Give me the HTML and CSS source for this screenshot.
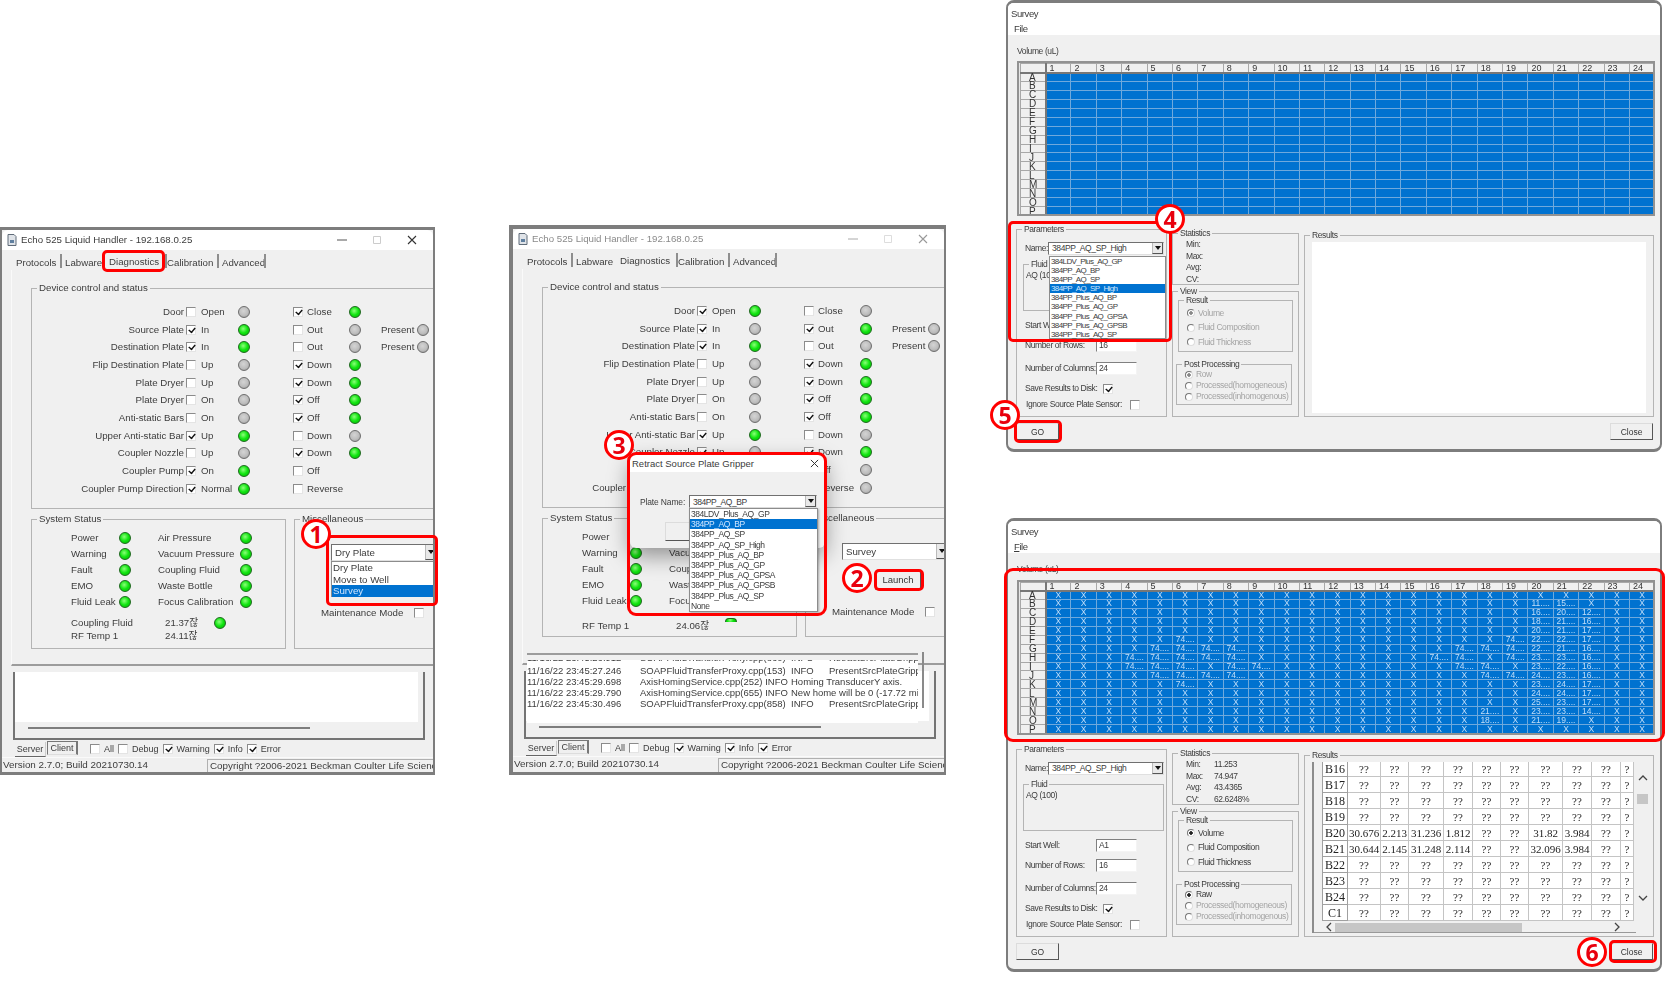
FILE: index.html
```html
<!DOCTYPE html>
<html lang="en">
<head>
<meta charset="utf-8">
<title>Echo 525 survey steps</title>
<link rel="stylesheet" href="styles.css">
</head>
<body>
<main class="canvas">

<section class="win win1">
  <header class="titlebar">
    <svg class="appicon" viewBox="0 0 10 12"><path d="M1 .5h6l2 2v9H1z" fill="#dfe3e8" stroke="#5f6b78"/><path d="M3 6h4v3H3z" fill="#5f7f9f"/></svg>
    <span class="wintitle">Echo 525 Liquid Handler - 192.168.0.25</span>
    <span class="winbtns">
      <svg viewBox="0 0 10 10"><path d="M0 5h10" stroke="#555"/></svg>
      <svg viewBox="0 0 10 10"><path d="M1.500 1.500h7v7h-7z" fill="none" stroke="#ccc"/></svg>
      <svg viewBox="0 0 10 10"><path d="M1 1l8 8M9 1l-8 8" stroke="#333" stroke-width="1.100"/></svg>
    </span>
  </header>
  <nav class="tabs">
    <span class="tab">Protocols</span><span class="tab nosep">Labware</span><span class="tab active">Diagnostics</span><span class="tab">Calibration</span><span class="tab">Advanced</span>
  </nav>
  <div class="panel">
    <fieldset class="device">
      <legend>Device control and status</legend>
      <div class="devgrid">
        <span class="l">Door</span><i class="cb"></i><span class="t">Open</span><i class="led"></i><i class="cb on c2"></i><span class="t">Close</span><i class="led on"></i>
        <span class="l">Source Plate</span><i class="cb on"></i><span class="t">In</span><i class="led on"></i><i class="cb c2"></i><span class="t">Out</span><i class="led"></i><span class="p">Present</span><i class="led"></i>
        <span class="l">Destination Plate</span><i class="cb on"></i><span class="t">In</span><i class="led on"></i><i class="cb c2"></i><span class="t">Out</span><i class="led"></i><span class="p">Present</span><i class="led"></i>
        <span class="l">Flip Destination Plate</span><i class="cb"></i><span class="t">Up</span><i class="led"></i><i class="cb on c2"></i><span class="t">Down</span><i class="led on"></i>
        <span class="l">Plate Dryer</span><i class="cb"></i><span class="t">Up</span><i class="led"></i><i class="cb on c2"></i><span class="t">Down</span><i class="led on"></i>
        <span class="l">Plate Dryer</span><i class="cb"></i><span class="t">On</span><i class="led"></i><i class="cb on c2"></i><span class="t">Off</span><i class="led on"></i>
        <span class="l">Anti-static Bars</span><i class="cb"></i><span class="t">On</span><i class="led"></i><i class="cb on c2"></i><span class="t">Off</span><i class="led on"></i>
        <span class="l">Upper Anti-static Bar</span><i class="cb on"></i><span class="t">Up</span><i class="led on"></i><i class="cb c2"></i><span class="t">Down</span><i class="led"></i>
        <span class="l">Coupler Nozzle</span><i class="cb"></i><span class="t">Up</span><i class="led"></i><i class="cb on c2"></i><span class="t">Down</span><i class="led on"></i>
        <span class="l">Coupler Pump</span><i class="cb on"></i><span class="t">On</span><i class="led on"></i><i class="cb c2"></i><span class="t">Off</span>
        <span class="l">Coupler Pump Direction</span><i class="cb on"></i><span class="t">Normal</span><i class="led on"></i><i class="cb c2"></i><span class="t">Reverse</span>
      </div>
    </fieldset>
    <div class="lower">
      <fieldset class="sys">
        <legend>System Status</legend>
        <div class="leds">
          <span>Power</span><i class="led on"></i><span>Air Pressure</span><i class="led on"></i>
          <span>Warning</span><i class="led on"></i><span>Vacuum Pressure</span><i class="led on"></i>
          <span>Fault</span><i class="led on"></i><span>Coupling Fluid</span><i class="led on"></i>
          <span>EMO</span><i class="led on"></i><span>Waste Bottle</span><i class="led on"></i>
          <span>Fluid Leak</span><i class="led on"></i><span>Focus Calibration</span><i class="led on"></i>
        </div>
        <div class="temps">
          <span>Coupling Fluid</span><span>21.37잖</span><i class="led on"></i>
          <span>RF Temp 1</span><span>24.11잖</span>
        </div>
      </fieldset>
      <fieldset class="misc">
        <legend>Miscellaneous</legend>
        <div class="sel misc-sel"><span>Dry Plate</span><i class="arrow"></i></div>
        <ul class="list misc-list"><li>Dry Plate</li><li>Move to Well</li><li class="hl">Survey</li></ul>
        <div class="maint"><span>Maintenance Mode</span><i class="cb"></i></div>
      </fieldset>
    </div>
  </div>
  <div class="logframe">
    <div class="logwhite"></div>
    <div class="hscroll"><i></i></div>
  </div>
  <div class="logtabs">
    <span class="ltab">Server</span><span class="ltab up">Client</span>
    <i class="cb f1"></i><span>All</span><i class="cb"></i><span>Debug</span><i class="cb on"></i><span>Warning</span><i class="cb on"></i><span>Info</span><i class="cb on"></i><span>Error</span>
  </div>
  <footer class="status"><span>Version 2.7.0; Build 20210730.14</span><span class="copy">Copyright ?2006-2021 Beckman Coulter Life Scienc</span></footer>
  <div class="teal"></div>
</section>

<section class="win win2">
  <header class="titlebar dim">
    <svg class="appicon" viewBox="0 0 10 12"><path d="M1 .5h6l2 2v9H1z" fill="#dfe3e8" stroke="#5f6b78"/><path d="M3 6h4v3H3z" fill="#5f7f9f"/></svg>
    <span class="wintitle">Echo 525 Liquid Handler - 192.168.0.25</span>
    <span class="winbtns">
      <svg viewBox="0 0 10 10"><path d="M0 5h10" stroke="#aaa"/></svg>
      <svg viewBox="0 0 10 10"><path d="M1.500 1.500h7v7h-7z" fill="none" stroke="#ddd"/></svg>
      <svg viewBox="0 0 10 10"><path d="M1 1l8 8M9 1l-8 8" stroke="#999" stroke-width="1.100"/></svg>
    </span>
  </header>
  <nav class="tabs">
    <span class="tab">Protocols</span><span class="tab nosep">Labware</span><span class="tab active">Diagnostics</span><span class="tab">Calibration</span><span class="tab">Advanced</span>
  </nav>
  <div class="panel">
    <fieldset class="device">
      <legend>Device control and status</legend>
      <div class="devgrid">
        <span class="l">Door</span><i class="cb on"></i><span class="t">Open</span><i class="led on"></i><i class="cb c2"></i><span class="t">Close</span><i class="led"></i>
        <span class="l">Source Plate</span><i class="cb on"></i><span class="t">In</span><i class="led"></i><i class="cb on c2"></i><span class="t">Out</span><i class="led on"></i><span class="p">Present</span><i class="led"></i>
        <span class="l">Destination Plate</span><i class="cb on"></i><span class="t">In</span><i class="led on"></i><i class="cb c2"></i><span class="t">Out</span><i class="led"></i><span class="p">Present</span><i class="led"></i>
        <span class="l">Flip Destination Plate</span><i class="cb"></i><span class="t">Up</span><i class="led"></i><i class="cb on c2"></i><span class="t">Down</span><i class="led on"></i>
        <span class="l">Plate Dryer</span><i class="cb"></i><span class="t">Up</span><i class="led"></i><i class="cb on c2"></i><span class="t">Down</span><i class="led on"></i>
        <span class="l">Plate Dryer</span><i class="cb"></i><span class="t">On</span><i class="led"></i><i class="cb on c2"></i><span class="t">Off</span><i class="led on"></i>
        <span class="l">Anti-static Bars</span><i class="cb"></i><span class="t">On</span><i class="led"></i><i class="cb on c2"></i><span class="t">Off</span><i class="led on"></i>
        <span class="l">Upper Anti-static Bar</span><i class="cb on"></i><span class="t">Up</span><i class="led on"></i><i class="cb c2"></i><span class="t">Down</span><i class="led"></i>
        <span class="l">Coupler Nozzle</span><i class="cb on"></i><span class="t">Up</span><i class="led"></i><i class="cb on c2"></i><span class="t">Down</span><i class="led on"></i>
        <span class="l">Coupler Pump</span><i class="cb on"></i><span class="t">On</span><i class="led"></i><i class="cb c2"></i><span class="t">Off</span><i class="led"></i>
        <span class="l">Coupler Pump Direction</span><i class="cb on"></i><span class="t">Normal</span><i class="led"></i><i class="cb c2"></i><span class="t">Reverse</span><i class="led"></i>
      </div>
    </fieldset>
    <div class="lower">
      <fieldset class="sys">
        <legend>System Status</legend>
        <div class="leds">
          <span>Power</span><i class="led on"></i><span>Air Pressure</span><i class="led on"></i>
          <span>Warning</span><i class="led on"></i><span>Vacuum Pressure</span><i class="led on"></i>
          <span>Fault</span><i class="led on"></i><span>Coupling Fluid</span><i class="led on"></i>
          <span>EMO</span><i class="led on"></i><span>Waste Bottle</span><i class="led on"></i>
          <span>Fluid Leak</span><i class="led on"></i><span>Focus Calibration</span><i class="led on"></i>
        </div>
        <div class="temps">
          <span></span><span></span><i class="led on dome"></i>
          <span>RF Temp 1</span><span>24.06잖</span>
        </div>
      </fieldset>
      <fieldset class="misc">
        <legend>Miscellaneous</legend>
        <div class="sel misc-sel"><span>Survey</span><i class="arrow"></i></div>
        <button class="btn launch">Launch</button>
        <div class="maint"><span>Maintenance Mode</span><i class="cb"></i></div>
      </fieldset>
    </div>
  </div>
  <div class="logframe">
    <div class="logwhite"></div>
    <div class="hscroll"><i></i></div>
  </div>
  <div class="logtabs">
    <span class="ltab">Server</span><span class="ltab up">Client</span>
    <i class="cb f1"></i><span>All</span><i class="cb"></i><span>Debug</span><i class="cb on"></i><span>Warning</span><i class="cb on"></i><span>Info</span><i class="cb on"></i><span>Error</span>
  </div>
  <footer class="status"><span>Version 2.7.0; Build 20210730.14</span><span class="copy">Copyright ?2006-2021 Beckman Coulter Life Scienc</span></footer>
  <div class="ghost">
    <div class="ghostline"></div>
    <div class="ghostlog">
      <div class="logline clip"><span>11/16/22 23:45:26.912</span><span>SOAPFluidTransferProxy.cpp(860)</span><span>INFO</span><span>RetractSrcPlateGripper</span></div>
      <div class="logline"><span>11/16/22 23:45:27.246</span><span>SOAPFluidTransferProxy.cpp(153)</span><span>INFO</span><span>PresentSrcPlateGripper</span></div>
      <div class="logline"><span>11/16/22 23:45:29.698</span><span>AxisHomingService.cpp(252) INFO</span><span class="sh">Homing TransducerY axis.</span></div>
      <div class="logline"><span>11/16/22 23:45:29.790</span><span>AxisHomingService.cpp(655) INFO</span><span class="sh">New home will be 0 (-17.72 micro</span></div>
      <div class="logline"><span>11/16/22 23:45:30.496</span><span>SOAPFluidTransferProxy.cpp(858)</span><span>INFO</span><span>PresentSrcPlateGripper</span></div>
    </div>
  </div>
  <div class="ghostbar"></div>
</section>

<section class="dialog">
  <header class="dlgtitle"><span>Retract Source Plate Gripper</span><svg viewBox="0 0 10 10"><path d="M1 1l8 8M9 1l-8 8" stroke="#333" stroke-width="1.100"/></svg></header>
  <div class="dlgbody">
    <div class="dlgrow"><span>Plate Name:</span>
      <div class="sel dlg-sel"><span>384PP_AQ_BP</span><i class="arrow"></i>
        <ul class="list dlg-list"><li>384LDV_Plus_AQ_GP</li><li class="hl">384PP_AQ_BP</li><li>384PP_AQ_SP</li><li>384PP_AQ_SP_High</li><li>384PP_Plus_AQ_BP</li><li>384PP_Plus_AQ_GP</li><li>384PP_Plus_AQ_GPSA</li><li>384PP_Plus_AQ_GPSB</li><li>384PP_Plus_AQ_SP</li><li>None</li></ul>
      </div>
    </div>
    <button class="btn dlgbtn">OK</button>
  </div>
</section>

<section class="win survey s1">
  <header class="band"><div>Survey</div><div class="menu">File</div></header>
  <div class="vol">Volume (uL)</div>
  <div class="plate">
    <table>
      <tr><th><th>1<th>2<th>3<th>4<th>5<th>6<th>7<th>8<th>9<th>10<th>11<th>12<th>13<th>14<th>15<th>16<th>17<th>18<th>19<th>20<th>21<th>22<th>23<th>24
      <tr><th>A<td><td><td><td><td><td><td><td><td><td><td><td><td><td><td><td><td><td><td><td><td><td><td><td>
      <tr><th>B<td><td><td><td><td><td><td><td><td><td><td><td><td><td><td><td><td><td><td><td><td><td><td><td>
      <tr><th>C<td><td><td><td><td><td><td><td><td><td><td><td><td><td><td><td><td><td><td><td><td><td><td><td>
      <tr><th>D<td><td><td><td><td><td><td><td><td><td><td><td><td><td><td><td><td><td><td><td><td><td><td><td>
      <tr><th>E<td><td><td><td><td><td><td><td><td><td><td><td><td><td><td><td><td><td><td><td><td><td><td><td>
      <tr><th>F<td><td><td><td><td><td><td><td><td><td><td><td><td><td><td><td><td><td><td><td><td><td><td><td>
      <tr><th>G<td><td><td><td><td><td><td><td><td><td><td><td><td><td><td><td><td><td><td><td><td><td><td><td>
      <tr><th>H<td><td><td><td><td><td><td><td><td><td><td><td><td><td><td><td><td><td><td><td><td><td><td><td>
      <tr><th>I<td><td><td><td><td><td><td><td><td><td><td><td><td><td><td><td><td><td><td><td><td><td><td><td>
      <tr><th>J<td><td><td><td><td><td><td><td><td><td><td><td><td><td><td><td><td><td><td><td><td><td><td><td>
      <tr><th>K<td><td><td><td><td><td><td><td><td><td><td><td><td><td><td><td><td><td><td><td><td><td><td><td>
      <tr><th>L<td><td><td><td><td><td><td><td><td><td><td><td><td><td><td><td><td><td><td><td><td><td><td><td>
      <tr><th>M<td><td><td><td><td><td><td><td><td><td><td><td><td><td><td><td><td><td><td><td><td><td><td><td>
      <tr><th>N<td><td><td><td><td><td><td><td><td><td><td><td><td><td><td><td><td><td><td><td><td><td><td><td>
      <tr><th>O<td><td><td><td><td><td><td><td><td><td><td><td><td><td><td><td><td><td><td><td><td><td><td><td>
      <tr><th>P<td><td><td><td><td><td><td><td><td><td><td><td><td><td><td><td><td><td><td><td><td><td><td><td>
    </table>
  </div>
  <div class="panes">
    <fieldset class="params">
      <legend>Parameters</legend>
      <div class="namerow"><span>Name:</span>
        <div class="sel name-sel"><span>384PP_AQ_SP_High</span><i class="arrow"></i>
          <ul class="list name-list"><li>384LDV_Plus_AQ_GP</li><li>384PP_AQ_BP</li><li>384PP_AQ_SP</li><li class="hl">384PP_AQ_SP_High</li><li>384PP_Plus_AQ_BP</li><li>384PP_Plus_AQ_GP</li><li>384PP_Plus_AQ_GPSA</li><li>384PP_Plus_AQ_GPSB</li><li>384PP_Plus_AQ_SP</li></ul>
        </div>
      </div>
      <fieldset class="fluid"><legend>Fluid</legend><div>AQ (100)</div></fieldset>
      <div class="form">
        <div class="frow"><span>Start Well:</span><span class="inp">A1</span></div>
        <div class="frow"><span>Number of Rows:</span><span class="inp">16</span></div>
        <div class="frow"><span>Number of Columns:</span><span class="inp">24</span></div>
        <div class="frow save"><span>Save Results to Disk:</span><i class="cb on"></i></div>
        <div class="frow ign"><span>Ignore Source Plate Sensor:</span><i class="cb"></i></div>
      </div>
    </fieldset>
    <div class="midcol">
      <fieldset class="stats">
        <legend>Statistics</legend>
        <div class="statgrid"><span>Min:</span><span></span><span>Max:</span><span></span><span>Avg:</span><span></span><span>CV:</span><span></span></div>
      </fieldset>
      <fieldset class="view">
        <legend>View</legend>
        <fieldset class="result off">
          <legend>Result</legend>
          <div class="rad"><i class="radio on"></i>Volume</div>
          <div class="rad"><i class="radio"></i>Fluid Composition</div>
          <div class="rad"><i class="radio"></i>Fluid Thickness</div>
        </fieldset>
        <fieldset class="post off">
          <legend>Post Processing</legend>
          <div class="rad"><i class="radio on"></i>Row</div>
          <div class="rad"><i class="radio"></i>Processed(homogeneous)</div>
          <div class="rad"><i class="radio"></i>Processed(inhomogenous)</div>
        </fieldset>
      </fieldset>
    </div>
    <fieldset class="results">
      <legend>Results</legend>
      <div class="rblank"></div>
    </fieldset>
  </div>
  <div class="actions"><button class="btn">GO</button><button class="btn">Close</button></div>
</section>

<section class="win survey s2">
  <header class="band"><div>Survey</div><div class="menu"><u>F</u>ile</div></header>
  <div class="vol">Volume (uL)</div>
  <div class="plate data">
    <table>
      <tr><th><th>1<th>2<th>3<th>4<th>5<th>6<th>7<th>8<th>9<th>10<th>11<th>12<th>13<th>14<th>15<th>16<th>17<th>18<th>19<th>20<th>21<th>22<th>23<th>24
      <tr><th>A<td>X<td>X<td>X<td>X<td>X<td>X<td>X<td>X<td>X<td>X<td>X<td>X<td>X<td>X<td>X<td>X<td>X<td>X<td>X<td>X<td>X<td>X<td>X<td>X
      <tr><th>B<td>X<td>X<td>X<td>X<td>X<td>X<td>X<td>X<td>X<td>X<td>X<td>X<td>X<td>X<td>X<td>X<td>X<td>X<td>X<td>11....<td>15....<td>X<td>X<td>X
      <tr><th>C<td>X<td>X<td>X<td>X<td>X<td>X<td>X<td>X<td>X<td>X<td>X<td>X<td>X<td>X<td>X<td>X<td>X<td>X<td>X<td>16....<td>20....<td>12....<td>X<td>X
      <tr><th>D<td>X<td>X<td>X<td>X<td>X<td>X<td>X<td>X<td>X<td>X<td>X<td>X<td>X<td>X<td>X<td>X<td>X<td>X<td>X<td>18....<td>21....<td>16....<td>X<td>X
      <tr><th>E<td>X<td>X<td>X<td>X<td>X<td>X<td>X<td>X<td>X<td>X<td>X<td>X<td>X<td>X<td>X<td>X<td>X<td>X<td>X<td>20....<td>21....<td>17....<td>X<td>X
      <tr><th>F<td>X<td>X<td>X<td>X<td>X<td>74....<td>X<td>X<td>X<td>X<td>X<td>X<td>X<td>X<td>X<td>X<td>X<td>X<td>74....<td>22....<td>22....<td>17....<td>X<td>X
      <tr><th>G<td>X<td>X<td>X<td>X<td>74....<td>74....<td>74....<td>74....<td>X<td>X<td>X<td>X<td>X<td>X<td>X<td>X<td>74....<td>74....<td>74....<td>22....<td>21....<td>16....<td>X<td>X
      <tr><th>H<td>X<td>X<td>X<td>74....<td>74....<td>74....<td>74....<td>74....<td>X<td>X<td>X<td>X<td>X<td>X<td>X<td>74....<td>74....<td>X<td>74....<td>23....<td>23....<td>16....<td>X<td>X
      <tr><th>I<td>X<td>X<td>X<td>74....<td>74....<td>74....<td>X<td>74....<td>74....<td>X<td>X<td>X<td>X<td>X<td>X<td>X<td>74....<td>74....<td>X<td>23....<td>22....<td>16....<td>X<td>X
      <tr><th>J<td>X<td>X<td>X<td>X<td>74....<td>74....<td>74....<td>74....<td>X<td>X<td>X<td>X<td>X<td>X<td>X<td>X<td>X<td>74....<td>74....<td>24....<td>23....<td>16....<td>X<td>X
      <tr><th>K<td>X<td>X<td>X<td>X<td>X<td>74....<td>X<td>X<td>X<td>X<td>X<td>X<td>X<td>X<td>X<td>X<td>X<td>X<td>X<td>23....<td>24....<td>17....<td>X<td>X
      <tr><th>L<td>X<td>X<td>X<td>X<td>X<td>X<td>X<td>X<td>X<td>X<td>X<td>X<td>X<td>X<td>X<td>X<td>X<td>X<td>X<td>24....<td>24....<td>17....<td>X<td>X
      <tr><th>M<td>X<td>X<td>X<td>X<td>X<td>X<td>X<td>X<td>X<td>X<td>X<td>X<td>X<td>X<td>X<td>X<td>X<td>X<td>X<td>25....<td>23....<td>17....<td>X<td>X
      <tr><th>N<td>X<td>X<td>X<td>X<td>X<td>X<td>X<td>X<td>X<td>X<td>X<td>X<td>X<td>X<td>X<td>X<td>X<td>21....<td>X<td>23....<td>23....<td>14....<td>X<td>X
      <tr><th>O<td>X<td>X<td>X<td>X<td>X<td>X<td>X<td>X<td>X<td>X<td>X<td>X<td>X<td>X<td>X<td>X<td>X<td>18....<td>X<td>21....<td>19....<td>X<td>X<td>X
      <tr><th>P<td>X<td>X<td>X<td>X<td>X<td>X<td>X<td>X<td>X<td>X<td>X<td>X<td>X<td>X<td>X<td>X<td>X<td>X<td>X<td>X<td>X<td>X<td>X<td>X
    </table>
  </div>
  <div class="panes">
    <fieldset class="params">
      <legend>Parameters</legend>
      <div class="namerow"><span>Name:</span>
        <div class="sel name-sel"><span>384PP_AQ_SP_High</span><i class="arrow"></i></div>
      </div>
      <fieldset class="fluid"><legend>Fluid</legend><div>AQ (100)</div></fieldset>
      <div class="form">
        <div class="frow"><span>Start Well:</span><span class="inp">A1</span></div>
        <div class="frow"><span>Number of Rows:</span><span class="inp">16</span></div>
        <div class="frow"><span>Number of Columns:</span><span class="inp">24</span></div>
        <div class="frow save"><span>Save Results to Disk:</span><i class="cb on"></i></div>
        <div class="frow ign"><span>Ignore Source Plate Sensor:</span><i class="cb"></i></div>
      </div>
    </fieldset>
    <div class="midcol">
      <fieldset class="stats">
        <legend>Statistics</legend>
        <div class="statgrid"><span>Min:</span><span>11.253</span><span>Max:</span><span>74.947</span><span>Avg:</span><span>43.4365</span><span>CV:</span><span>62.6248%</span></div>
      </fieldset>
      <fieldset class="view">
        <legend>View</legend>
        <fieldset class="result">
          <legend>Result</legend>
          <div class="rad"><i class="radio on"></i>Volume</div>
          <div class="rad"><i class="radio"></i>Fluid Composition</div>
          <div class="rad"><i class="radio"></i>Fluid Thickness</div>
        </fieldset>
        <fieldset class="post">
          <legend>Post Processing</legend>
          <div class="rad"><i class="radio on"></i>Raw</div>
          <div class="rad off"><i class="radio"></i>Processed(homogeneous)</div>
          <div class="rad off"><i class="radio"></i>Processed(inhomogenous)</div>
        </fieldset>
      </fieldset>
    </div>
    <fieldset class="results">
      <legend>Results</legend>
      <div class="rbox">
        <div class="rtable">
          <table>
            <tr><th>B16<td>??<td>??<td>??<td>??<td>??<td>??<td>??<td>??<td>??<td>?
            <tr><th>B17<td>??<td>??<td>??<td>??<td>??<td>??<td>??<td>??<td>??<td>?
            <tr><th>B18<td>??<td>??<td>??<td>??<td>??<td>??<td>??<td>??<td>??<td>?
            <tr><th>B19<td>??<td>??<td>??<td>??<td>??<td>??<td>??<td>??<td>??<td>?
            <tr><th>B20<td>30.676<td>2.213<td>31.236<td>1.812<td>??<td>??<td>31.82<td>3.984<td>??<td>?
            <tr><th>B21<td>30.644<td>2.145<td>31.248<td>2.114<td>??<td>??<td>32.096<td>3.984<td>??<td>?
            <tr><th>B22<td>??<td>??<td>??<td>??<td>??<td>??<td>??<td>??<td>??<td>?
            <tr><th>B23<td>??<td>??<td>??<td>??<td>??<td>??<td>??<td>??<td>??<td>?
            <tr><th>B24<td>??<td>??<td>??<td>??<td>??<td>??<td>??<td>??<td>??<td>?
            <tr><th>C1<td>??<td>??<td>??<td>??<td>??<td>??<td>??<td>??<td>??<td>?
          </table>
        </div>
        <div class="vbar">
          <svg viewBox="0 0 10 6"><path d="M1 5l4-4 4 4" fill="none" stroke="#444" stroke-width="1.300"/></svg>
          <i class="vthumb"></i>
          <svg class="vdown" viewBox="0 0 10 6"><path d="M1 1l4 4 4-4" fill="none" stroke="#444" stroke-width="1.300"/></svg>
        </div>
        <div class="hbar">
          <svg viewBox="0 0 6 10"><path d="M5 1L1 5l4 4" fill="none" stroke="#444" stroke-width="1.300"/></svg>
          <i class="hthumb"></i>
          <svg viewBox="0 0 6 10"><path d="M1 1l4 4-4 4" fill="none" stroke="#444" stroke-width="1.300"/></svg>
        </div>
      </div>
    </fieldset>
  </div>
  <div class="actions"><button class="btn">GO</button><button class="btn">Close</button></div>
</section>

<div class="rb rb-tab"></div>
<div class="rb rb-misc"></div>
<div class="rb rb-launch"></div>
<div class="rb rb-dlg"></div>
<div class="rb rb-params"></div>
<div class="rb rb-go"></div>
<div class="rb rb-grid"></div>
<div class="rb rb-close"></div>
<div class="num n1">1</div>
<div class="num n2">2</div>
<div class="num n3">3</div>
<div class="num n4">4</div>
<div class="num n5">5</div>
<div class="num n6">6</div>
</main>
</body>
</html>
```

FILE: styles.css
```css
* { box-sizing: border-box; }
html, body { margin: 0; padding: 0; background: #fff; }
.canvas {
  position: relative; width: 1667px; height: 981px; overflow: hidden; background: #fff;
  font: 9.700px/12px "Liberation Sans", Arial, "Noto Sans CJK KR", sans-serif; color: #3c3c3c;
}
i { font-style: normal; display: block; }
ul { list-style: none; margin: 0; padding: 0; }
fieldset { margin: 0; padding: 0; min-width: 0; border: 1px solid #b4b4b4; }
legend { padding: 0 2px; margin-left: 5px; line-height: 12px; }

/* windows on the canvas */
.win { position: absolute; background: #f0f0f0; border: 2px solid #7d7d7d; overflow: hidden; filter: blur(.3px); }
.win1 { left: 0; top: 227px; width: 435px; height: 548px; border-top-width: 3px; border-bottom-width: 3px; }
.win2 { left: 509px; top: 225px; width: 437px; height: 550px; border-left-width: 4px; border-top-width: 4px; border-bottom-width: 3px; }

.titlebar { display: flex; align-items: center; height: 20px; background: #fff; padding-left: 5px; border-radius: 6px 6px 0 0; }
.appicon { width: 10px; height: 12px; margin-right: 4px; }
.wintitle { flex: 1; }
.dim .wintitle { color: #8a8a8a; }
.winbtns { display: flex; gap: 25px; margin-right: 16px; }
.winbtns svg { width: 10px; height: 10px; }

.tabs { display: grid; grid-template-columns: 49px 44px 58px 55px 47px; height: 20px; padding: 5px 0 0 14px; }
.tab { position: relative; height: 15px; line-height: 15px; }
.tab::after { content: ""; position: absolute; right: 3px; top: -1px; width: 2px; height: 14px; background: #8e8e8e; }
.tab.nosep::after { display: none; }
.tab.active { margin-top: -1px; }
.tab.active::after { right: 0; top: 0; }

.panel { margin-left: 9px; height: 396px; padding: 12px 0 0 19px; border-left: 1px solid #fafafa; border-bottom: 2px solid #9c9c9c; }
.device { width: 410px; height: 227px; }
.devgrid { display: grid; padding-top: 9px; grid-template-columns: 152px 14px 39px 14px 42px 14px 41px 14px 19px 35px 14px; grid-auto-rows: 17.700px; align-items: center; }
.l { grid-column: 1; text-align: right; white-space: nowrap; }
.cb { width: 10px; height: 10px; background: #fff; border: 1px solid; border-color: #8b8b8b #e4e4e4 #e4e4e4 #8b8b8b; justify-self: center; }
.cb.on::after { content: ""; display: block; width: 4px; height: 7px; margin: -1px 0 0 2px; border: solid #111; border-width: 0 2px 2px 0; transform: rotate(40deg) scale(.72); }
.c2 { grid-column: 6; justify-self: start; }
.t { padding-left: 3px; white-space: nowrap; }
.c2 + .t { padding-left: 0; }
.p { grid-column: 10; justify-self: start; }
.led { width: 12px; height: 12px; border-radius: 50%; justify-self: center; border: 1px solid #6d6d6d; background: radial-gradient(circle at 45% 40%, #d4d4d4, #bdbdbd 55%, #8d8d8d); }
.led.on { border-color: #1c6a1c; background: radial-gradient(circle at 42% 38%, #8cff7a, #10e410 50%, #05b505); }
.led.dome { height: 4px; align-self: end; margin-bottom: -3px; border-radius: 6px 6px 0 0; border-bottom: 0; }

.lower { display: flex; gap: 8px; margin-top: 4px; }
.sys { width: 255px; height: 136px; flex: none; }
.win2 .sys, .win2 .misc { height: 125px; }
.misc { width: 145px; height: 136px; flex: none; padding-left: 36px; }
.misc legend { margin-left: -31px; }
.leds { display: grid; padding: 5px 0 0 39px; grid-template-columns: 48px 12px 27px 82px 12px; grid-auto-rows: 16px; align-items: center; }
.leds span:nth-of-type(even) { grid-column: 4; white-space: nowrap; }
.temps { display: grid; margin-top: 6px; padding-left: 39px; grid-template-columns: 94px 49px 12px; grid-auto-rows: 13px; align-items: center; }
.win2 .temps { margin-top: -3px; }

.sel { position: relative; display: flex; align-items: center; background: #fff; border: 1px solid; border-color: #707070 #e0e0e0 #e0e0e0 #707070; padding-left: 3px; white-space: nowrap; }
.sel > span { flex: 1; }
.arrow { width: 11px; height: 100%; background: #e9e9e9; border-left: 1px solid #bbb; border-right: 1px solid #555; border-bottom: 1px solid #555; position: relative; }
.arrow::after { content: ""; position: absolute; left: 2px; top: 50%; margin-top: -2px; border: 3px solid transparent; border-top: 4px solid #111; border-bottom: 0; }
.misc-sel { margin-top: 19px; width: 106px; height: 17px; }
.list { background: #fff; border: 1px solid #8c8c8c; line-height: 11.500px; }
.list .hl { background: #0072d0; color: #cfe6ff; }
.misc-list { width: 103px; height: 36px; }
.misc-list li { padding-left: 1px; }
.maint { display: flex; justify-content: space-between; align-items: center; width: 103px; margin: 10px 0 0 -10px; }
.btn { display: block; padding: 0; font: 9.500px/12px "Liberation Sans", Arial, sans-serif; color: #333; background: #f0f0f0; border: 1px solid; border-color: #dcdcdc #565656 #565656 #dcdcdc; }
.launch { width: 46px; height: 20px; margin: 10px 0 0 33px; }
.win2 .maint { margin-top: 16px; }

.logframe { margin: 6px 0 0 11px; width: 412px; height: 68px; border-left: 2px solid #747474; border-right: 2px solid #747474; border-bottom: 2px solid #747474; }
.logwhite { width: 403px; height: 50px; background: #fff; }
.hscroll i { width: 282px; height: 2px; margin: 5px 0 0 13px; background: #7d7d7d; }

.logtabs { display: flex; align-items: center; height: 16px; margin-top: 1px; padding-left: 13px; gap: 4px; font-size: 9px; }
.logtabs .cb { flex: none; }
.logtabs .f1 { margin-left: 8px; }
.ltab { width: 31px; height: 15px; line-height: 15px; text-align: center; margin-right: -3px; border-bottom: 1px solid #666; border-right: 1px solid #ccc; }
.ltab.up { height: 14px; margin: -3px 0 0 0; border: 1px solid #777; border-bottom-color: #ddd; border-right-width: 2px; line-height: 12px; }
.status { display: flex; height: 15px; align-items: center; padding-left: 1px; white-space: nowrap; font-size: 9.850px; border-top: 1px solid #fafafa; }
.status > span:first-child { flex: 0 0 204px; }
.copy { border-left: 1px solid #b0b0b0; border-top: 1px solid #b0b0b0; padding-left: 2px; height: 14px; margin-top: 1px; }
.teal { width: 282px; height: 2px; background: #2d7f8f; }

/* W2 leftovers from a half redrawn splitter */
.ghost { position: absolute; left: 14px; top: 423px; width: 391px; }
.ghostline { height: 2px; background: #9c9c9c; margin-top: 1px; }
.ghostlog { margin-top: 5px; height: 63px; background: #fff; overflow: hidden; font-size: 9.500px; line-height: 11px; }
.logline { display: grid; grid-template-columns: 113px 151px 38px 1fr; white-space: nowrap; overflow: hidden; }
.logline.clip { margin-top: -8px; margin-bottom: 2px; }
.logline .sh { grid-column: 3 / 5; }
.ghostbar { position: absolute; left: 409px; top: 423px; width: 2px; height: 56px; background: #8a8a8a; }

/* modal */
.dialog { position: absolute; left: 630px; top: 455px; width: 195px; height: 93px; background: #f0f0f0; box-shadow: 0 8px 22px rgba(0,0,0,.4); filter: blur(.3px); border-radius: 6px; }
.dlgtitle { display: flex; justify-content: space-between; align-items: center; height: 17px; padding: 0 6px 0 2px; background: #fff; border-radius: 6px 6px 0 0; font-size: 9.500px; }
.dlgtitle svg { width: 9px; height: 9px; }
.dlgbody { padding: 23px 0 0 10px; font-size: 8.500px; letter-spacing: -.15px; }
.dlgrow { display: flex; align-items: center; gap: 4px; height: 13px; }
.dlgrow > span { width: 45px; white-space: nowrap; }
.dlg-sel { width: 128px; height: 13px; font-size: 8.500px; letter-spacing: -.45px; }
.dlg-list { position: absolute; z-index: 2; left: -1px; top: 12px; width: 129px; height: 104px; line-height: 10.200px; padding-left: 1px; box-shadow: 1px 1px 2px rgba(0,0,0,.3); }
.dlg-list .hl { margin-left: -1px; padding-left: 1px; }
.dlgbtn { width: 80px; height: 19px; margin: 14px 0 0 25px; }

/* survey windows */
.survey { left: 1006px; width: 656px; height: 452px; border-top-width: 3px; border-bottom-width: 3px; border-radius: 8px; font-size: 8.500px; line-height: 11px; letter-spacing: -.4px; }
.s1 { top: 0; }
.s2 { top: 518px; height: 454px; }
.band { height: 32px; padding: 3px 0 0 3px; background: #fff; font-size: 9.500px; line-height: 15px; }
.menu { padding-left: 3px; }
.vol { height: 26px; padding: 11px 0 0 9px; }
.s2 .vol { height: 27px; }
.plate { width: 638px; height: 155px; margin-left: 9px; padding: 0 0 0 1px; border: 2px solid #929292; background: #e6e6e6; overflow: hidden; }
.plate table { table-layout: fixed; width: 634px; border-collapse: collapse; letter-spacing: 0; }
.plate th { width: 25.400px; height: 8.940px; padding: 0 0 0 3px; background: #f0f0f0; border: 1px solid #a8a8a8; font: 10px/7px "Liberation Sans", Arial, sans-serif; color: #333; text-align: left; }
.plate tr th:first-child { width: 25px; border-right: 2px solid #777; padding-left: 8px; }
.plate tr:first-child th { border-bottom: 2px solid #777; height: 9px; line-height: 6px; font-size: 9px; }
.plate.data tr:first-child th { height: 8px; }
.plate td { height: 8.940px; padding: 0; background: #0072d0; border: 1px solid #6fa9dc; font: 8.500px/7px "Liberation Sans", Arial, sans-serif; color: #c2def8; text-align: center; overflow: hidden; white-space: nowrap; }
.panes { display: flex; gap: 5px; align-items: flex-start; height: 194px; margin: 7px 0 0 8px; }
.s2 .panes { margin-top: 8px; }
.params { width: 151px; height: 194px; flex: none; padding-left: 8px; }
.params > legend { margin-left: -3px; }
.namerow { display: flex; align-items: center; height: 13px; margin-top: 7px; }
.namerow > span { width: 23px; }
.name-sel { width: 116px; height: 13px; }
.name-list { position: absolute; z-index: 2; left: 0; top: 13px; width: 117px; height: 83px; line-height: 9.100px; font-size: 8px; letter-spacing: -.6px; padding-left: 1px; }
.name-list .hl { margin-left: -1px; padding-left: 1px; }
.fluid { width: 141px; height: 53px; margin: 3px 0 0 -2px; }
.fluid div { padding-left: 2px; }
.form { display: grid; grid-template-rows: 20px 20px 26px 15px 17px; margin-top: 4px; }
.frow { display: flex; align-items: center; white-space: nowrap; }
.frow > span:first-child { width: 71px; }
.inp { width: 41px; height: 13px; padding-left: 2px; background: #fff; border: 1px solid; border-color: #808080 #f4f4f4 #f4f4f4 #808080; }
.save .cb { margin-left: 7px; }
.ign > span:first-child { width: auto; margin-left: 1px; }
.ign .cb { margin-left: 8px; }
.midcol { width: 127px; flex: none; padding-top: 4px; }
.stats { height: 58px; }
.statgrid { display: grid; grid-template-columns: 28px 1fr; grid-auto-rows: 11.500px; padding-left: 13px; }
.view { height: 132px; padding-left: 5px; }
.view > legend { margin-left: 0; }
.result { width: 115px; height: 58px; margin-top: -3px; }
.post { width: 116px; height: 47px; margin: 6px 0 0 -2px; }
.off, .off legend { color: #a4a4a4; }
.result.off legend, .post.off legend { color: #3c3c3c; }
.rad { display: flex; align-items: center; gap: 3px; height: 14.500px; padding-left: 8px; white-space: nowrap; }
.post .rad { height: 11px; margin-top: -1px; }
.post .rad + .rad { margin-top: 0; }
.radio { width: 8px; height: 8px; flex: none; border-radius: 50%; background: #fff; border: 1px solid; border-color: #777 #ddd #ddd #777; }
.radio.on { background: radial-gradient(circle, #222 0 1.500px, #fff 2px); }
.off .radio.on { background: radial-gradient(circle, #888 0 1.500px, #fff 2px); }
.results { width: 350px; height: 188px; flex: none; margin-top: 6px; padding-left: 7px; }
.results > legend { margin-left: -2px; }
.rblank { width: 334px; height: 171px; background: #fff; margin-top: 1px; }
.rbox { display: grid; width: 335px; height: 171px; margin-top: 1px; grid-template-columns: 322px 13px; grid-template-rows: 160px 11px; border-left: 2px solid #8c8c8c; }
.rtable { overflow: hidden; padding-left: 8px; }
.rtable table { table-layout: fixed; width: 312px; border-collapse: collapse; margin-top: -2px; background: #fff; letter-spacing: 0; }
.rtable th, .rtable td { height: 16px; padding: 0; font: 11px/14px "Liberation Serif", "Times New Roman", serif; color: #222; text-align: center; border: 1px solid #c4c4c4; white-space: nowrap; overflow: hidden; }
.rtable th { width: 25px; font-weight: 400; font-size: 12px; border-color: #a0a0a0; }
.rtable td:nth-child(2) { width: 33px; }
.rtable td:nth-child(3) { width: 28px; }
.rtable td:nth-child(4) { width: 35px; }
.rtable td:nth-child(5) { width: 29px; }
.rtable td:nth-child(6) { width: 28px; }
.rtable td:nth-child(7) { width: 28px; }
.rtable td:nth-child(8) { width: 34px; }
.rtable td:nth-child(9) { width: 29px; }
.rtable td:nth-child(10) { width: 29px; }
.vbar { grid-row: 1 / 3; grid-column: 2; display: flex; flex-direction: column; align-items: center; padding-top: 13px; background: #f0f0f0; }
.vbar svg { width: 10px; height: 6px; }
.vthumb { width: 11px; height: 10px; margin-top: 13px; background: #c6c6c6; }
.vbar .vdown { margin-top: 91px; }
.hbar { display: flex; align-items: center; padding-left: 12px; background: #f0f0f0; border-bottom: 1px solid #999; }
.hbar svg { width: 6px; height: 10px; flex: none; }
.hthumb { width: 187px; height: 9px; margin: 0 92px 0 3px; background: #c6c6c6; }
.actions { display: flex; justify-content: space-between; padding: 6px 7px 0 8px; }
.actions .btn { width: 43px; height: 17px; font-size: 8.500px; }

/* annotations */
.rb { position: absolute; border: 3px solid #f00; border-radius: 5px; }
.rb-tab { left: 102px; top: 250px; width: 63px; height: 22px; }
.rb-misc { left: 326px; top: 535px; width: 112px; height: 71px; }
.rb-launch { left: 874px; top: 569px; width: 50px; height: 22px; }
.rb-dlg { left: 627px; top: 452px; width: 200px; height: 164px; border-radius: 9px; }
.rb-params { left: 1008px; top: 221px; width: 164px; height: 121px; }
.rb-go { left: 1014px; top: 420px; width: 48px; height: 23px; }
.rb-grid { left: 1004px; top: 568px; width: 661px; height: 174px; border-radius: 9px; }
.rb-close { left: 1609px; top: 940px; width: 48px; height: 23px; }
.num { position: absolute; width: 30px; height: 30px; border-radius: 50%; border: 3px solid #f00; background: #fff; color: #e8000e; font: 700 23px/24px "Open Sans", "Liberation Sans", sans-serif; text-align: center; }
.n1 { left: 301px; top: 519px; }
.n2 { left: 842px; top: 563px; }
.n3 { left: 604px; top: 430px; }
.n4 { left: 1155px; top: 204px; }
.n5 { left: 990px; top: 400px; }
.n6 { left: 1577px; top: 937px; }
```
